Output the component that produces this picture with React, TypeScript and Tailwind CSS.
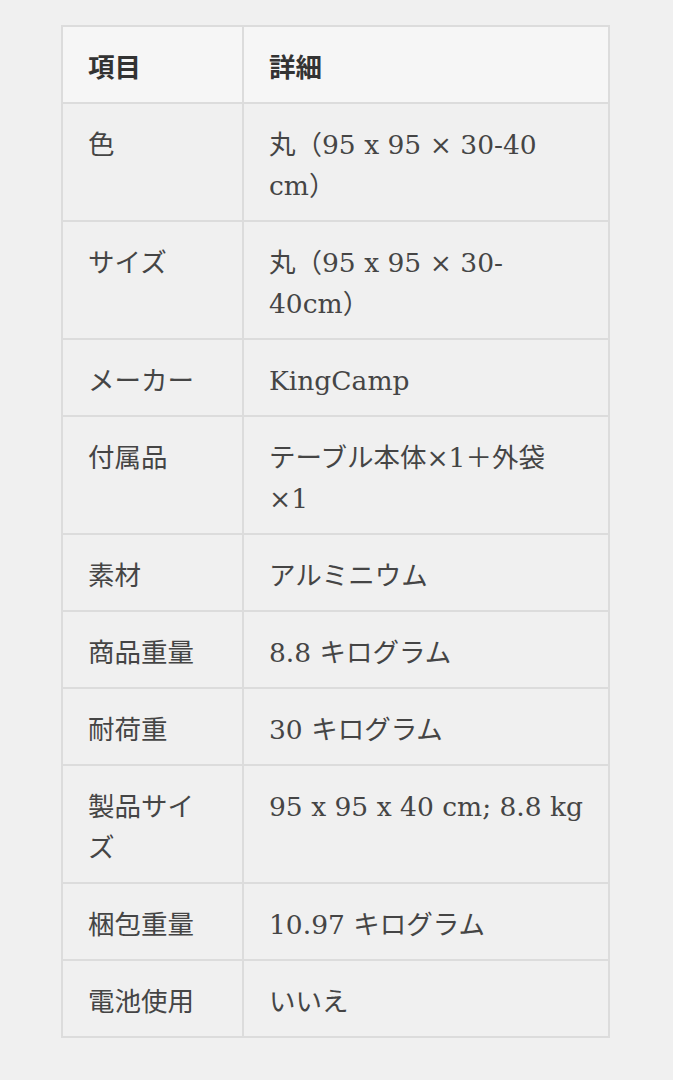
const rows: { label: React.ReactNode; value: React.ReactNode }[] = [
  { label: "色", value: <>丸（95 x 95 × 30-40<br />cm）</> },
  { label: "サイズ", value: <>丸（95 x 95 × 30-<br />40cm）</> },
  { label: "メーカー", value: "KingCamp" },
  { label: "付属品", value: <>テーブル本体×1＋外袋<br />×1</> },
  { label: "素材", value: "アルミニウム" },
  { label: "商品重量", value: "8.8 キログラム" },
  { label: "耐荷重", value: "30 キログラム" },
  { label: <>製品サイ<br />ズ</>, value: "95 x 95 x 40 cm; 8.8 kg" },
  { label: "梱包重量", value: "10.97 キログラム" },
  { label: "電池使用", value: "いいえ" },
];

const cell =
  "border-2 border-[#dcdcdc] px-[25px] pt-[20px] pb-[14px] align-top whitespace-nowrap";

export default function App() {
  return (
    <div
      className="min-h-[1080px] w-[673px] bg-[#f0f0f0] pt-[25px] text-[26.5px] leading-[41px] text-[#454545]"
      style={{
        fontFamily: '"DejaVu Serif", "Noto Sans CJK JP", serif',
      }}
    >
      <table className="ml-[61px] w-[549px] table-fixed border-collapse">
        <colgroup>
          <col className="w-[181px]" />
          <col />
        </colgroup>
        <thead>
          <tr className="bg-[#f6f6f6] text-[#333]">
            <th className={`${cell} text-left font-bold`}>項目</th>
            <th className={`${cell} text-left font-bold`}>詳細</th>
          </tr>
        </thead>
        <tbody>
          {rows.map((r, i) => (
            <tr key={i}>
              <td className={cell}>{r.label}</td>
              <td className={cell}>{r.value}</td>
            </tr>
          ))}
        </tbody>
      </table>
    </div>
  );
}
